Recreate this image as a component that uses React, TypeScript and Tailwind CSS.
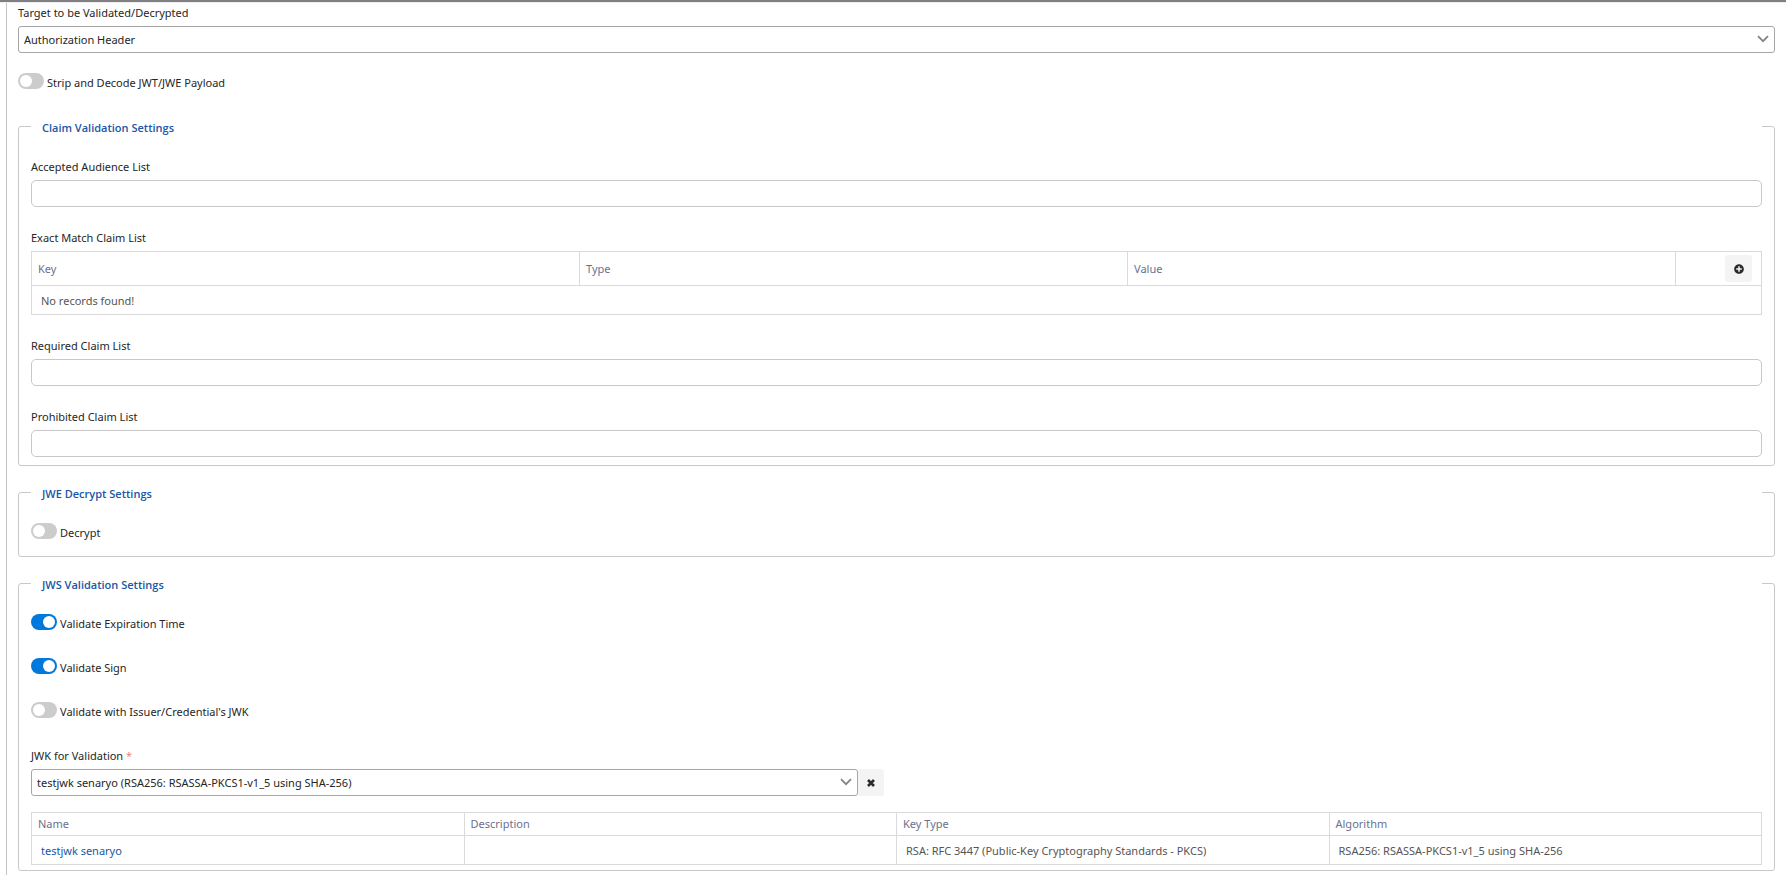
import { useId, useState, type ReactNode } from "react";
import { FaPlusCircle } from "react-icons/fa";
import clsx from "clsx";

const TARGETS = ["Authorization Header", "Custom Header", "Request Body"];
const JWKS = ["testjwk senaryo (RSA256: RSASSA-PKCS1-v1_5 using SHA-256)"];

function Select({ id, options, className }: { id: string; options: string[]; className?: string }) {
  return (
    <div className={clsx("relative", className)}>
      <select
        id={id}
        className="block h-[27px] w-full appearance-none rounded-[3px] border border-[#a6a6a6] bg-white pl-[5px] pr-7 text-[#262626]"
      >
        {options.map((o) => (
          <option key={o}>{o}</option>
        ))}
      </select>
      <svg
        aria-hidden
        viewBox="0 0 12 8"
        className="pointer-events-none absolute right-1.5 top-[9px] h-2 w-3"
        fill="none"
        stroke="#848484"
        strokeWidth="1.8"
      >
        <path d="M1 1.2 6 6.2 11 1.2" />
      </svg>
    </div>
  );
}

function Switch({ label, defaultChecked = false }: { label: string; defaultChecked?: boolean }) {
  const id = useId();
  const [checked, setChecked] = useState(defaultChecked);
  return (
    <div className="flex items-start gap-[3px]">
      <input
        id={id}
        type="checkbox"
        role="switch"
        checked={checked}
        onChange={(e) => setChecked(e.target.checked)}
        className="flex h-4 w-[26px] shrink-0 appearance-none items-center rounded-full bg-[#ccc] px-0.5 before:size-3 before:rounded-full before:bg-white checked:justify-end checked:bg-[#0078dc]"
      />
      <label htmlFor={id} className="pt-0.5">
        {label}
      </label>
    </div>
  );
}

function TextField({ label }: { label: string }) {
  const id = useId();
  return (
    <div>
      <label htmlFor={id} className="mb-[5px] block">
        {label}
      </label>
      <input
        id={id}
        type="text"
        className="block h-[27px] w-full rounded-[5px] border border-[#c8c8c8] bg-white px-[5px]"
      />
    </div>
  );
}

function Section({ title, className, children }: { title: string; className: string; children: ReactNode }) {
  return (
    <fieldset className="mt-4 rounded-[3px] border border-[#c8c8c8] px-3">
      <legend className="h-5 w-full px-[11px] pt-1 font-['Open_Sans',sans-serif] font-semibold text-[#1a56a6]">
        {title}
      </legend>
      <div className={className}>{children}</div>
    </fieldset>
  );
}

const th = "border border-[#dadada] px-1.5 text-left font-normal text-[#6a7190]";
const td = "border border-[#dadada] px-[9px] pt-0.5 text-[#555]";

export default function App() {
  return (
    <div className="flex min-h-screen flex-col border-t-2 border-[#808080] bg-white font-['Noto_Sans',sans-serif] text-[11px] leading-4 text-[#262626]">
      <div className="border-t border-[#ececf2]" />
      <main className="ml-1.5 grow border-l border-[#c4c4c4] px-[11px] pt-0.5">
        <label htmlFor="target" className="mb-[5px] block">
          Target to be Validated/Decrypted
        </label>
        <Select id="target" options={TARGETS} />
        <div className="mb-[25px] mt-5">
          <Switch label="Strip and Decode JWT/JWE Payload" />
        </div>

        <Section title="Claim Validation Settings" className="flex flex-col gap-[23px] pb-2 pt-[23px]">
          <TextField label="Accepted Audience List" />
          <div>
            <p className="mb-[5px]" id="exact-match">
              Exact Match Claim List
            </p>
            <table aria-labelledby="exact-match" className="w-full table-fixed border-collapse">
              <thead>
                <tr className="h-[34px]">
                  <th className={th}>Key</th>
                  <th className={th}>Type</th>
                  <th className={th}>Value</th>
                  <th className="w-[86px] border border-[#dadada] pr-[9px]">
                    <button
                      type="button"
                      aria-label="Add claim"
                      className="ml-auto flex size-[27px] items-center justify-center rounded-[3px] bg-[#f4f4f4] text-[#2b2b2b]"
                    >
                      <FaPlusCircle size={10} />
                    </button>
                  </th>
                </tr>
              </thead>
              <tbody>
                <tr className="h-[29px]">
                  <td colSpan={4} className={td}>
                    No records found!
                  </td>
                </tr>
              </tbody>
            </table>
          </div>
          <TextField label="Required Claim List" />
          <TextField label="Prohibited Claim List" />
        </Section>

        <Section title="JWE Decrypt Settings" className="pb-[15px] pt-[21px]">
          <Switch label="Decrypt" />
        </Section>

        <Section title="JWS Validation Settings" className="pb-[5px] pt-[21px]">
          <div className="flex flex-col gap-[26px]">
            <Switch label="Validate Expiration Time" defaultChecked />
            <Switch label="Validate Sign" defaultChecked />
            <Switch label="Validate with Issuer/Credential's JWK" />
          </div>
          <label htmlFor="jwk" className="mb-[5px] mt-7 block">
            JWK for Validation <span className="text-[#f08080]">*</span>
          </label>
          <div className="flex">
            <Select id="jwk" options={JWKS} className="w-[47.8%]" />
            <button
              type="button"
              aria-label="Clear JWK"
              className="flex h-[27px] w-[26px] items-center justify-center rounded-r-[3px] bg-[#f4f4f4]"
            >
              <svg aria-hidden viewBox="0 0 8 8" className="size-2" stroke="#2b2b2b" strokeWidth="2.6">
                <path d="M1 1 7 7M7 1 1 7" />
              </svg>
            </button>
          </div>
          <table className="mt-4 w-full table-fixed border-collapse">
            <thead>
              <tr className="h-[23px]">
                <th className={th}>Name</th>
                <th className={th}>Description</th>
                <th className={th}>Key Type</th>
                <th className={th}>Algorithm</th>
              </tr>
            </thead>
            <tbody>
              <tr className="h-[29px]">
                <td className={td}>
                  <a href="#testjwk" className="text-[#1a56a6]">
                    testjwk senaryo
                  </a>
                </td>
                <td className={td} />
                <td className={td}>RSA: RFC 3447 (Public-Key Cryptography Standards - PKCS)</td>
                <td className={td}>RSA256: RSASSA-PKCS1-v1_5 using SHA-256</td>
              </tr>
            </tbody>
          </table>
        </Section>
      </main>
    </div>
  );
}
